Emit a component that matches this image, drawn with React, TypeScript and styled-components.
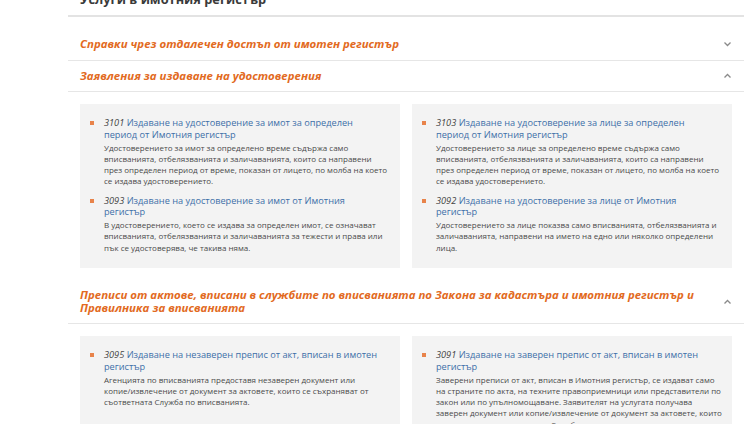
import React from "react";
import styled, { createGlobalStyle } from "styled-components";

const Global = createGlobalStyle`
  html, body { margin: 0; padding: 0; background: #fff; }
  body { font-family: "Open Sans", "Liberation Sans", sans-serif; overflow: hidden; }
`;

const Column = styled.div`
  margin-left: 68px;
  width: 676px;
`;

const PageTitle = styled.h1`
  margin: -9px 0 0;
  padding: 0 12px 8px;
  font-family: "Open Sans", sans-serif;
  font-size: 12.8px;
  line-height: 16px;
  font-weight: 700;
  color: #3a3a3a;
  border-bottom: 2px solid #e3e3e3;
`;

const Sections = styled.div`
  margin-top: 12px;
`;

const Section = styled.div``;

const Header = styled.div`
  display: flex;
  align-items: center;
  justify-content: space-between;
  padding: 9px 12px 9px 12px;
  border-bottom: 1px solid #e6e6e6;
`;

const HeaderText = styled.span`
  font-family: "Open Sans", sans-serif;
  font-style: italic;
  font-weight: 700;
  font-size: 11.45px;
  line-height: 12.5px;
  color: #e26a22;
  max-width: 640px;
`;

const Chevron = styled.svg`
  flex: none;
  width: 9px;
  height: 6px;
  color: #8a8a8a;
`;

const Body = styled.div`
  display: grid;
  grid-template-columns: 1fr 1fr;
  gap: 12px;
  padding: 12px 12px;
`;

const Panel = styled.div`
  background: #f3f3f3;
  padding: 13px 10px 15px 10px;
  display: flex;
  flex-direction: column;
  gap: 8px;
`;

const Item = styled.div`
  display: grid;
  grid-template-columns: 14px 1fr;
`;

const Bullet = styled.span`
  width: 4px;
  height: 4px;
  background: #e8834a;
  margin-top: 4px;
`;

const ItemTitle = styled.div`
  font-size: 9.2px;
  line-height: 11.5px;
  color: #3d6fa8;
  margin-bottom: 1.5px;
  padding-right: 2px;
`;

const Code = styled.span`
  font-style: italic;
  color: #444;
`;

const Desc = styled.div`
  grid-column: 2;
  font-size: 8px;
  line-height: 11.3px;
  color: #4a4a4a;
`;

type ItemData = { code: string; title: string; desc: string };

const Down = () => (
  <Chevron viewBox="0 0 9 6" fill="none">
    <polyline points="1.5,1.5 4.5,4.5 7.5,1.5" stroke="currentColor" strokeWidth="1.3" />
  </Chevron>
);
const Up = () => (
  <Chevron viewBox="0 0 9 6" fill="none">
    <polyline points="1.5,4.5 4.5,1.5 7.5,4.5" stroke="currentColor" strokeWidth="1.3" />
  </Chevron>
);

const ServiceItem = ({ d }: { d: ItemData }) => (
  <Item>
    <Bullet />
    <ItemTitle>
      <Code>{d.code}</Code> {d.title}
    </ItemTitle>
    <Desc>{d.desc}</Desc>
  </Item>
);

const sec2Left: ItemData[] = [
  {
    code: "3101",
    title: "Издаване на удостоверение за имот за определен период от Имотния регистър",
    desc: "Удостоверението за имот за определено време съдържа само вписванията, отбелязванията и заличаванията, които са направени през определен период от време, показан от лицето, по молба на което се издава удостоверението.",
  },
  {
    code: "3093",
    title: "Издаване на удостоверение за имот от Имотния регистър",
    desc: "В удостоверението, което се издава за определен имот, се означават вписванията, отбелязванията и заличаванията за тежести и права или пък се удостоверява, че такива няма.",
  },
];

const sec2Right: ItemData[] = [
  {
    code: "3103",
    title: "Издаване на удостоверение за лице за определен период от Имотния регистър",
    desc: "Удостоверението за лице за определено време съдържа само вписванията, отбелязванията и заличаванията, които са направени през определен период от време, показан от лицето, по молба на което се издава удостоверението.",
  },
  {
    code: "3092",
    title: "Издаване на удостоверение за лице от Имотния регистър",
    desc: "Удостоверението за лице показва само вписванията, отбелязванията и заличаванията, направени на името на едно или няколко определени лица.",
  },
];

const sec3Left: ItemData[] = [
  {
    code: "3095",
    title: "Издаване на незаверен препис от акт, вписан в имотен регистър",
    desc: "Агенцията по вписванията предоставя незаверен документ или копие/\u2060извлечение от документ за актовете, които се съхраняват от съответната Служба по вписванията.",
  },
];

const sec3Right: ItemData[] = [
  {
    code: "3091",
    title: "Издаване на заверен препис от акт, вписан в имотен регистър",
    desc: "Заверени преписи от акт, вписан в Имотния регистър, се издават само на страните по акта, на техните правоприемници или представители по закон или по упълномощаване. Заявителят на услугата получава заверен документ или копие/\u2060извлечение от документ за актовете, които се съхраняват в съответната Служба по вписванията.",
  },
];

export default function App() {
  return (
    <>
      <Global />
      <Column>
        <PageTitle>Услуги в имотния регистър</PageTitle>
        <Sections>
          <Section>
            <Header>
              <HeaderText>Справки чрез отдалечен достъп от имотен регистър</HeaderText>
              <Down />
            </Header>
          </Section>
          <Section>
            <Header>
              <HeaderText>Заявления за издаване на удостоверения</HeaderText>
              <Up />
            </Header>
            <Body>
              <Panel>
                {sec2Left.map((d) => (
                  <ServiceItem key={d.code} d={d} />
                ))}
              </Panel>
              <Panel>
                {sec2Right.map((d) => (
                  <ServiceItem key={d.code} d={d} />
                ))}
              </Panel>
            </Body>
          </Section>
          <Section>
            <Header>
              <HeaderText>
                Преписи от актове, вписани в службите по вписванията по Закона за кадастъра и имотния регистър и Правилника за вписванията
              </HeaderText>
              <Up />
            </Header>
            <Body>
              <Panel>
                {sec3Left.map((d) => (
                  <ServiceItem key={d.code} d={d} />
                ))}
              </Panel>
              <Panel>
                {sec3Right.map((d) => (
                  <ServiceItem key={d.code} d={d} />
                ))}
              </Panel>
            </Body>
          </Section>
        </Sections>
      </Column>
    </>
  );
}
